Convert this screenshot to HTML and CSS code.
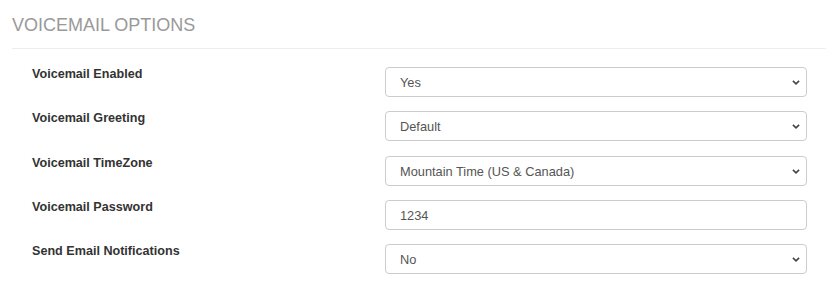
FILE: index.html
```html
<!DOCTYPE html>
<html>
<head>
<meta charset="utf-8">
<link rel="stylesheet" href="styles.css">
</head>
<body>
<div class="panel">
  <div class="panel-head"><h3 class="title">VOICEMAIL OPTIONS</h3></div>
  <form class="form">
    <div class="row">
      <label class="label">Voicemail Enabled</label>
      <div class="field">
        <select class="control"><option>Yes</option><option>No</option></select>
        <svg class="chev" width="8" height="5" viewBox="0 0 8 5"><path d="M0.9 0.9 L4 3.8 L7.1 0.9" fill="none" stroke="#444" stroke-width="1.6"/></svg>
      </div>
    </div>
    <div class="row">
      <label class="label">Voicemail Greeting</label>
      <div class="field">
        <select class="control"><option>Default</option></select>
        <svg class="chev" width="8" height="5" viewBox="0 0 8 5"><path d="M0.9 0.9 L4 3.8 L7.1 0.9" fill="none" stroke="#444" stroke-width="1.6"/></svg>
      </div>
    </div>
    <div class="row">
      <label class="label">Voicemail TimeZone</label>
      <div class="field">
        <select class="control"><option>Mountain Time (US &amp; Canada)</option></select>
        <svg class="chev" width="8" height="5" viewBox="0 0 8 5"><path d="M0.9 0.9 L4 3.8 L7.1 0.9" fill="none" stroke="#444" stroke-width="1.6"/></svg>
      </div>
    </div>
    <div class="row">
      <label class="label">Voicemail Password</label>
      <div class="field">
        <input class="control" type="text" value="1234">
      </div>
    </div>
    <div class="row">
      <label class="label">Send Email Notifications</label>
      <div class="field">
        <select class="control"><option>No</option><option>Yes</option></select>
        <svg class="chev" width="8" height="5" viewBox="0 0 8 5"><path d="M0.9 0.9 L4 3.8 L7.1 0.9" fill="none" stroke="#444" stroke-width="1.6"/></svg>
      </div>
    </div>
  </form>
</div>
</body>
</html>
```
FILE: styles.css
```css
* { box-sizing: border-box; }
html, body {
  margin: 0;
  padding: 0;
  background: #fff;
  font-family: "Liberation Sans", Arial, sans-serif;
}
.panel {
  width: 826px;
}
.panel-head {
  margin-left: 12px;
  padding-top: 15px;
  padding-bottom: 13px;
  border-bottom: 1px solid #eeeeee;
}
.title {
  margin: 0;
  font-size: 18px;
  line-height: 20px;
  font-weight: normal;
  color: #999999;
}
.form {
  margin: 0;
  padding: 18px 19px 0 32px;
}
.row {
  display: flex;
  align-items: flex-start;
  margin-bottom: 14.3px;
}
.label {
  width: 353px;
  flex: none;
  font-size: 12.6px;
  line-height: 14px;
  font-weight: bold;
  color: #333333;
}
.field {
  position: relative;
  flex: 1;
}
.control {
  display: block;
  width: 100%;
  height: 30px;
  margin: 0;
  padding: 1px 14px 0;
  border: 1px solid #cccccc;
  border-radius: 4px;
  background: #fff;
  font-family: "Liberation Sans", Arial, sans-serif;
  font-size: 12.8px;
  color: #555555;
  appearance: none;
  -webkit-appearance: none;
  outline: none;
}
.chev {
  position: absolute;
  right: 7px;
  top: 13px;
  pointer-events: none;
}
```
